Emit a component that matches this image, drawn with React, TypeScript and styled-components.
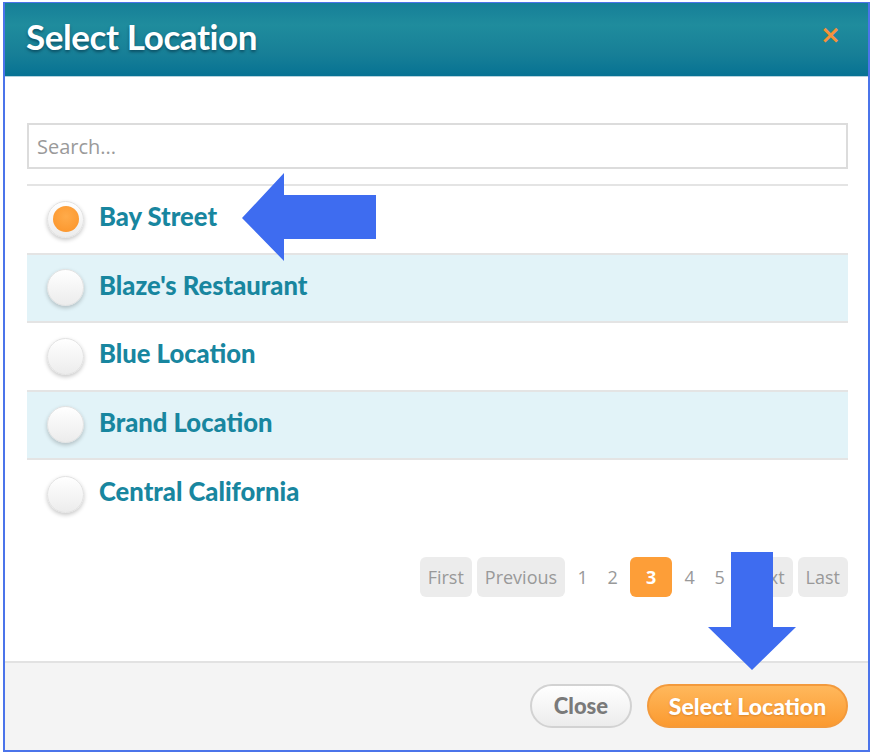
import styled, { createGlobalStyle } from "styled-components";

const GlobalStyle = createGlobalStyle`
  html, body {
    margin: 0;
    padding: 0;
    background: #fff;
  }
  body {
    font-family: Lato, "Open Sans", Arial, sans-serif;
  }
  * {
    box-sizing: border-box;
  }
`;

const locations = [
  "Bay Street",
  "Blaze's Restaurant",
  "Blue Location",
  "Brand Location",
  "Central California",
];

const pages = ["1", "2", "3", "4", "5"];

export default function App() {
  return (
    <>
      <GlobalStyle />
      <Frame>
        <Modal>
          <Header>
            <Title>Select Location</Title>
            <CloseX>×</CloseX>
          </Header>
          <Body>
            <SearchInput placeholder="Search..." />
            <List>
              {locations.map((name, i) => (
                <Row key={name} striped={i % 2 === 1}>
                  <Radio checked={i === 0} />
                  <RowLabel>{name}</RowLabel>
                </Row>
              ))}
            </List>
            <Pager>
              <PageButton>First</PageButton>
              <PageButton>Previous</PageButton>
              {pages.map((p) => (
                <PageNumber key={p} active={p === "3"}>
                  {p}
                </PageNumber>
              ))}
              <PageButton>Next</PageButton>
              <PageButton>Last</PageButton>
            </Pager>
          </Body>
          <Footer>
            <CloseButton>Close</CloseButton>
            <PrimaryButton>Select Location</PrimaryButton>
          </Footer>
          <LeftArrow viewBox="0 0 134 88">
            <path d="M0 45 L42 0 L42 22 L134 22 L134 66 L42 66 L42 88 Z" />
          </LeftArrow>
          <DownArrow viewBox="0 0 88 118">
            <path d="M23 0 L65 0 L65 75 L88 75 L44 118 L0 75 L23 75 Z" />
          </DownArrow>
        </Modal>
      </Frame>
    </>
  );
}

const Frame = styled.div`
  width: 874px;
  height: 755px;
  padding: 2px 4px 3px 3px;
`;

const Modal = styled.div`
  position: relative;
  height: 100%;
  display: flex;
  flex-direction: column;
  border: 2px solid #4b74ea;
  border-top-width: 1px;
  background: #fff;
`;

const Header = styled.header`
  height: 74px;
  display: flex;
  align-items: center;
  justify-content: space-between;
  padding: 0 27px 0 21px;
  background: linear-gradient(#167f98 0%, #1f8c9d 30%, #177f97 70%, #067293 100%);
  border-bottom: 1px solid #b3d3de;
`;

const Title = styled.h1`
  margin: 0 0 8px;
  font-family: Lato, "Open Sans", sans-serif;
  font-size: 35px;
  font-weight: 700;
  letter-spacing: -0.4px;
  color: #fff;
  text-shadow: 0 2px 3px rgba(0, 40, 60, 0.55);
`;

const CloseX = styled.span`
  font-family: "DejaVu Sans", sans-serif;
  font-size: 25px;
  font-weight: 700;
  color: #f5923a;
  margin-bottom: 10px;
`;

const Body = styled.main`
  flex: 1;
  padding: 46px 20px 0 22px;
  display: flex;
  flex-direction: column;
`;

const SearchInput = styled.input`
  width: 100%;
  height: 46px;
  border: 2px solid #dcdcdc;
  padding: 0 8px;
  font-family: "Open Sans", sans-serif;
  font-size: 20px;
  color: #555;
  outline: none;
  &::placeholder {
    color: #9a9a9a;
  }
`;

const List = styled.div`
  margin-top: 15px;
  border-top: 2px solid #e4e4e4;
  display: flex;
  flex-direction: column;
`;

const Row = styled.div<{ striped: boolean }>`
  height: 68.5px;
  display: flex;
  align-items: center;
  gap: 15px;
  padding-left: 20px;
  background: ${({ striped }) => (striped ? "#e2f3f8" : "#fff")};
  border-bottom: 2px solid #e4e4e4;
  &:last-child {
    border-bottom: none;
  }
`;

const Radio = styled.span<{ checked: boolean }>`
  width: 37px;
  height: 37px;
  flex: none;
  border-radius: 50%;
  background: linear-gradient(#ffffff, #ececec);
  border: 1px solid #e2e2e2;
  box-shadow: 0 2px 4px rgba(0, 0, 0, 0.22);
  display: flex;
  align-items: center;
  justify-content: center;
  &::after {
    content: "";
    display: ${({ checked }) => (checked ? "block" : "none")};
    width: 26px;
    height: 26px;
    border-radius: 50%;
    background: radial-gradient(circle at 50% 40%, #ffab4a, #fb9328);
  }
`;

const RowLabel = styled.span`
  margin-bottom: 6px;
  font-family: Lato, "Open Sans", sans-serif;
  font-size: 25.6px;
  font-weight: 900;
  color: #18869f;
`;

const Pager = styled.nav`
  margin-top: 28px;
  display: flex;
  justify-content: flex-end;
  align-items: center;
  gap: 5px;
`;

const PageButton = styled.span`
  height: 40px;
  padding: 0 8px;
  display: flex;
  align-items: center;
  border-radius: 6px;
  background: #ececec;
  font-family: "Open Sans", sans-serif;
  font-size: 18px;
  color: #999;
`;

const PageNumber = styled.span<{ active: boolean }>`
  height: 40px;
  min-width: ${({ active }) => (active ? "42px" : "25px")};
  display: flex;
  align-items: center;
  justify-content: center;
  border-radius: 6px;
  background: ${({ active }) => (active ? "#fd9e38" : "transparent")};
  font-family: "Open Sans", sans-serif;
  font-size: 18px;
  font-weight: ${({ active }) => (active ? 700 : 400)};
  color: ${({ active }) => (active ? "#fff" : "#999")};
`;

const Footer = styled.footer`
  height: 89px;
  display: flex;
  justify-content: flex-end;
  align-items: center;
  gap: 15px;
  padding: 0 20px 2px 0;
  background: #f4f4f4;
  border-top: 2px solid #e2e2e2;
`;

const Pill = styled.button`
  height: 44px;
  border-radius: 22px;
  font-family: Lato, "Open Sans", sans-serif;
  font-size: 22px;
  font-weight: 900;
  cursor: pointer;
`;

const CloseButton = styled(Pill)`
  width: 102px;
  color: #7a7a7a;
  background: linear-gradient(#ffffff, #ececec);
  border: 2px solid #d2d2d2;
`;

const PrimaryButton = styled(Pill)`
  width: 201px;
  padding: 0;
  font-size: 23px;
  color: #fff;
  background: linear-gradient(#ffb85c, #fb9a30);
  border: 2px solid #f39a3c;
  text-shadow: 0 1px 2px rgba(160, 80, 0, 0.35);
`;

const LeftArrow = styled.svg`
  position: absolute;
  left: 237px;
  top: 170px;
  width: 134px;
  height: 88px;
  fill: #3e6cf0;
`;

const DownArrow = styled.svg`
  position: absolute;
  left: 703px;
  top: 549px;
  width: 88px;
  height: 118px;
  fill: #3e6cf0;
`;
